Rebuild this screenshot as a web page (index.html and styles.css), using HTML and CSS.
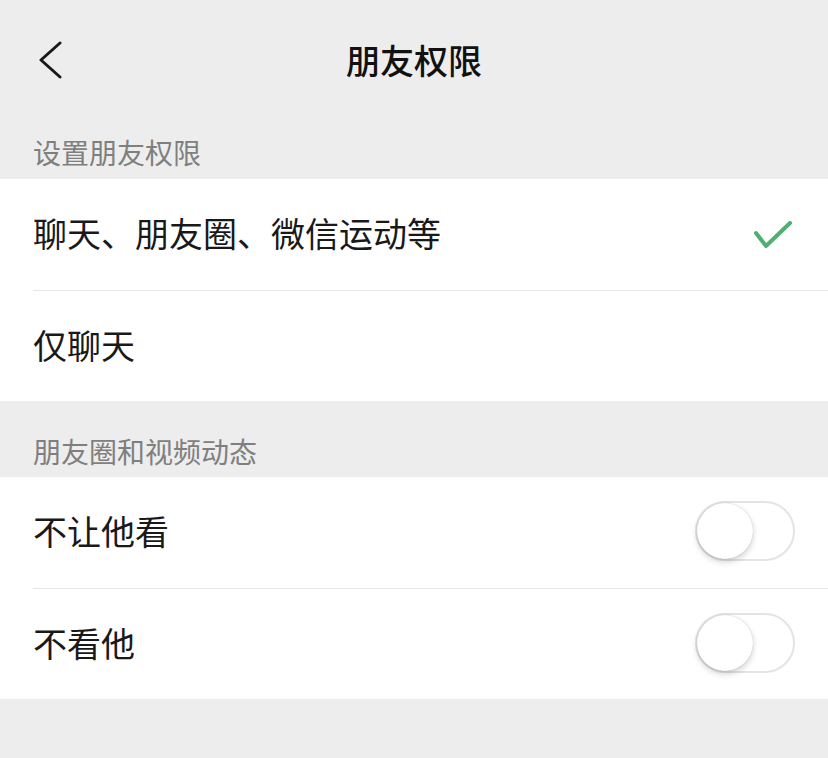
FILE: index.html
```html
<!DOCTYPE html>
<html lang="zh-CN">
<head>
<meta charset="utf-8">
<title>朋友权限</title>
<link rel="stylesheet" href="styles.css">
</head>
<body>
<div class="page">
  <header class="nav">
    <span class="back">
      <svg width="24" height="40" viewBox="0 0 24 40"><polyline points="21,3 2,20 21,37" fill="none" stroke="#1a1a1a" stroke-width="3" stroke-linecap="round" stroke-linejoin="round"/></svg>
    </span>
    <h1 class="title">朋友权限</h1>
  </header>

  <div class="section-title first">设置朋友权限</div>
  <div class="group">
    <div class="row">
      <span class="label">聊天、朋友圈、微信运动等</span>
      <svg class="check" width="40" height="30" viewBox="0 0 40 30"><polyline points="3,12 13,25 37,2" fill="none" stroke="#4fb06f" stroke-width="4" stroke-linecap="round" stroke-linejoin="round"/></svg>
    </div>
    <div class="row divided">
      <span class="label">仅聊天</span>
    </div>
  </div>

  <div class="section-title second">朋友圈和视频动态</div>
  <div class="group">
    <div class="row">
      <span class="label">不让他看</span>
      <span class="switch"><span class="knob"></span></span>
    </div>
    <div class="row divided">
      <span class="label">不看他</span>
      <span class="switch"><span class="knob"></span></span>
    </div>
  </div>
</div>
</body>
</html>
```

FILE: styles.css
```css
html, body {
  margin: 0;
  padding: 0;
  background: #ededed;
}
body {
  font-family: "Noto Sans CJK SC", "Noto Sans", sans-serif;
  color: #191919;
}
.page {
  width: 828px;
  min-height: 758px;
  background: #ededed;
}
.nav {
  height: 120px;
  display: flex;
  align-items: center;
  justify-content: center;
  position: relative;
}
.back {
  position: absolute;
  left: 39px;
  top: 40px;
  width: 24px;
  height: 40px;
}
.back svg { display: block; }
.title {
  margin: 0;
  font-size: 34px;
  line-height: 40px;
  font-weight: 500;
  color: #111;
  letter-spacing: 0;
}
.section-title {
  padding-left: 33px;
  font-size: 28px;
  line-height: 28px;
  color: #7f7f7f;
}
.section-title.first {
  padding-top: 18px;
  padding-bottom: 13px;
}
.section-title.second {
  padding-top: 36px;
  padding-bottom: 12px;
}
.group {
  background: #fff;
}
.row {
  height: 111px;
  box-sizing: border-box;
  margin-left: 33px;
  padding-right: 33px;
  padding-bottom: 3px;
  display: flex;
  align-items: center;
  justify-content: space-between;
}
.row.divided {
  border-top: 1px solid #e6e6e6;
}
.label {
  font-size: 34px;
  line-height: 40px;
  color: #191919;
}
.check {
  display: block;
  margin-right: 2px;
  margin-top: 6px;
}
.switch {
  width: 100px;
  height: 60px;
  box-sizing: border-box;
  border: 2px solid #e4e4e4;
  border-radius: 30px;
  background: #fff;
  position: relative;
  margin-top: 0;
}
.knob {
  position: absolute;
  left: 0;
  top: 0;
  width: 56px;
  height: 56px;
  border-radius: 50%;
  background: #fff;
  box-shadow: 0 3px 6px rgba(0,0,0,0.18), 0 0 1px rgba(0,0,0,0.25);
}
```
